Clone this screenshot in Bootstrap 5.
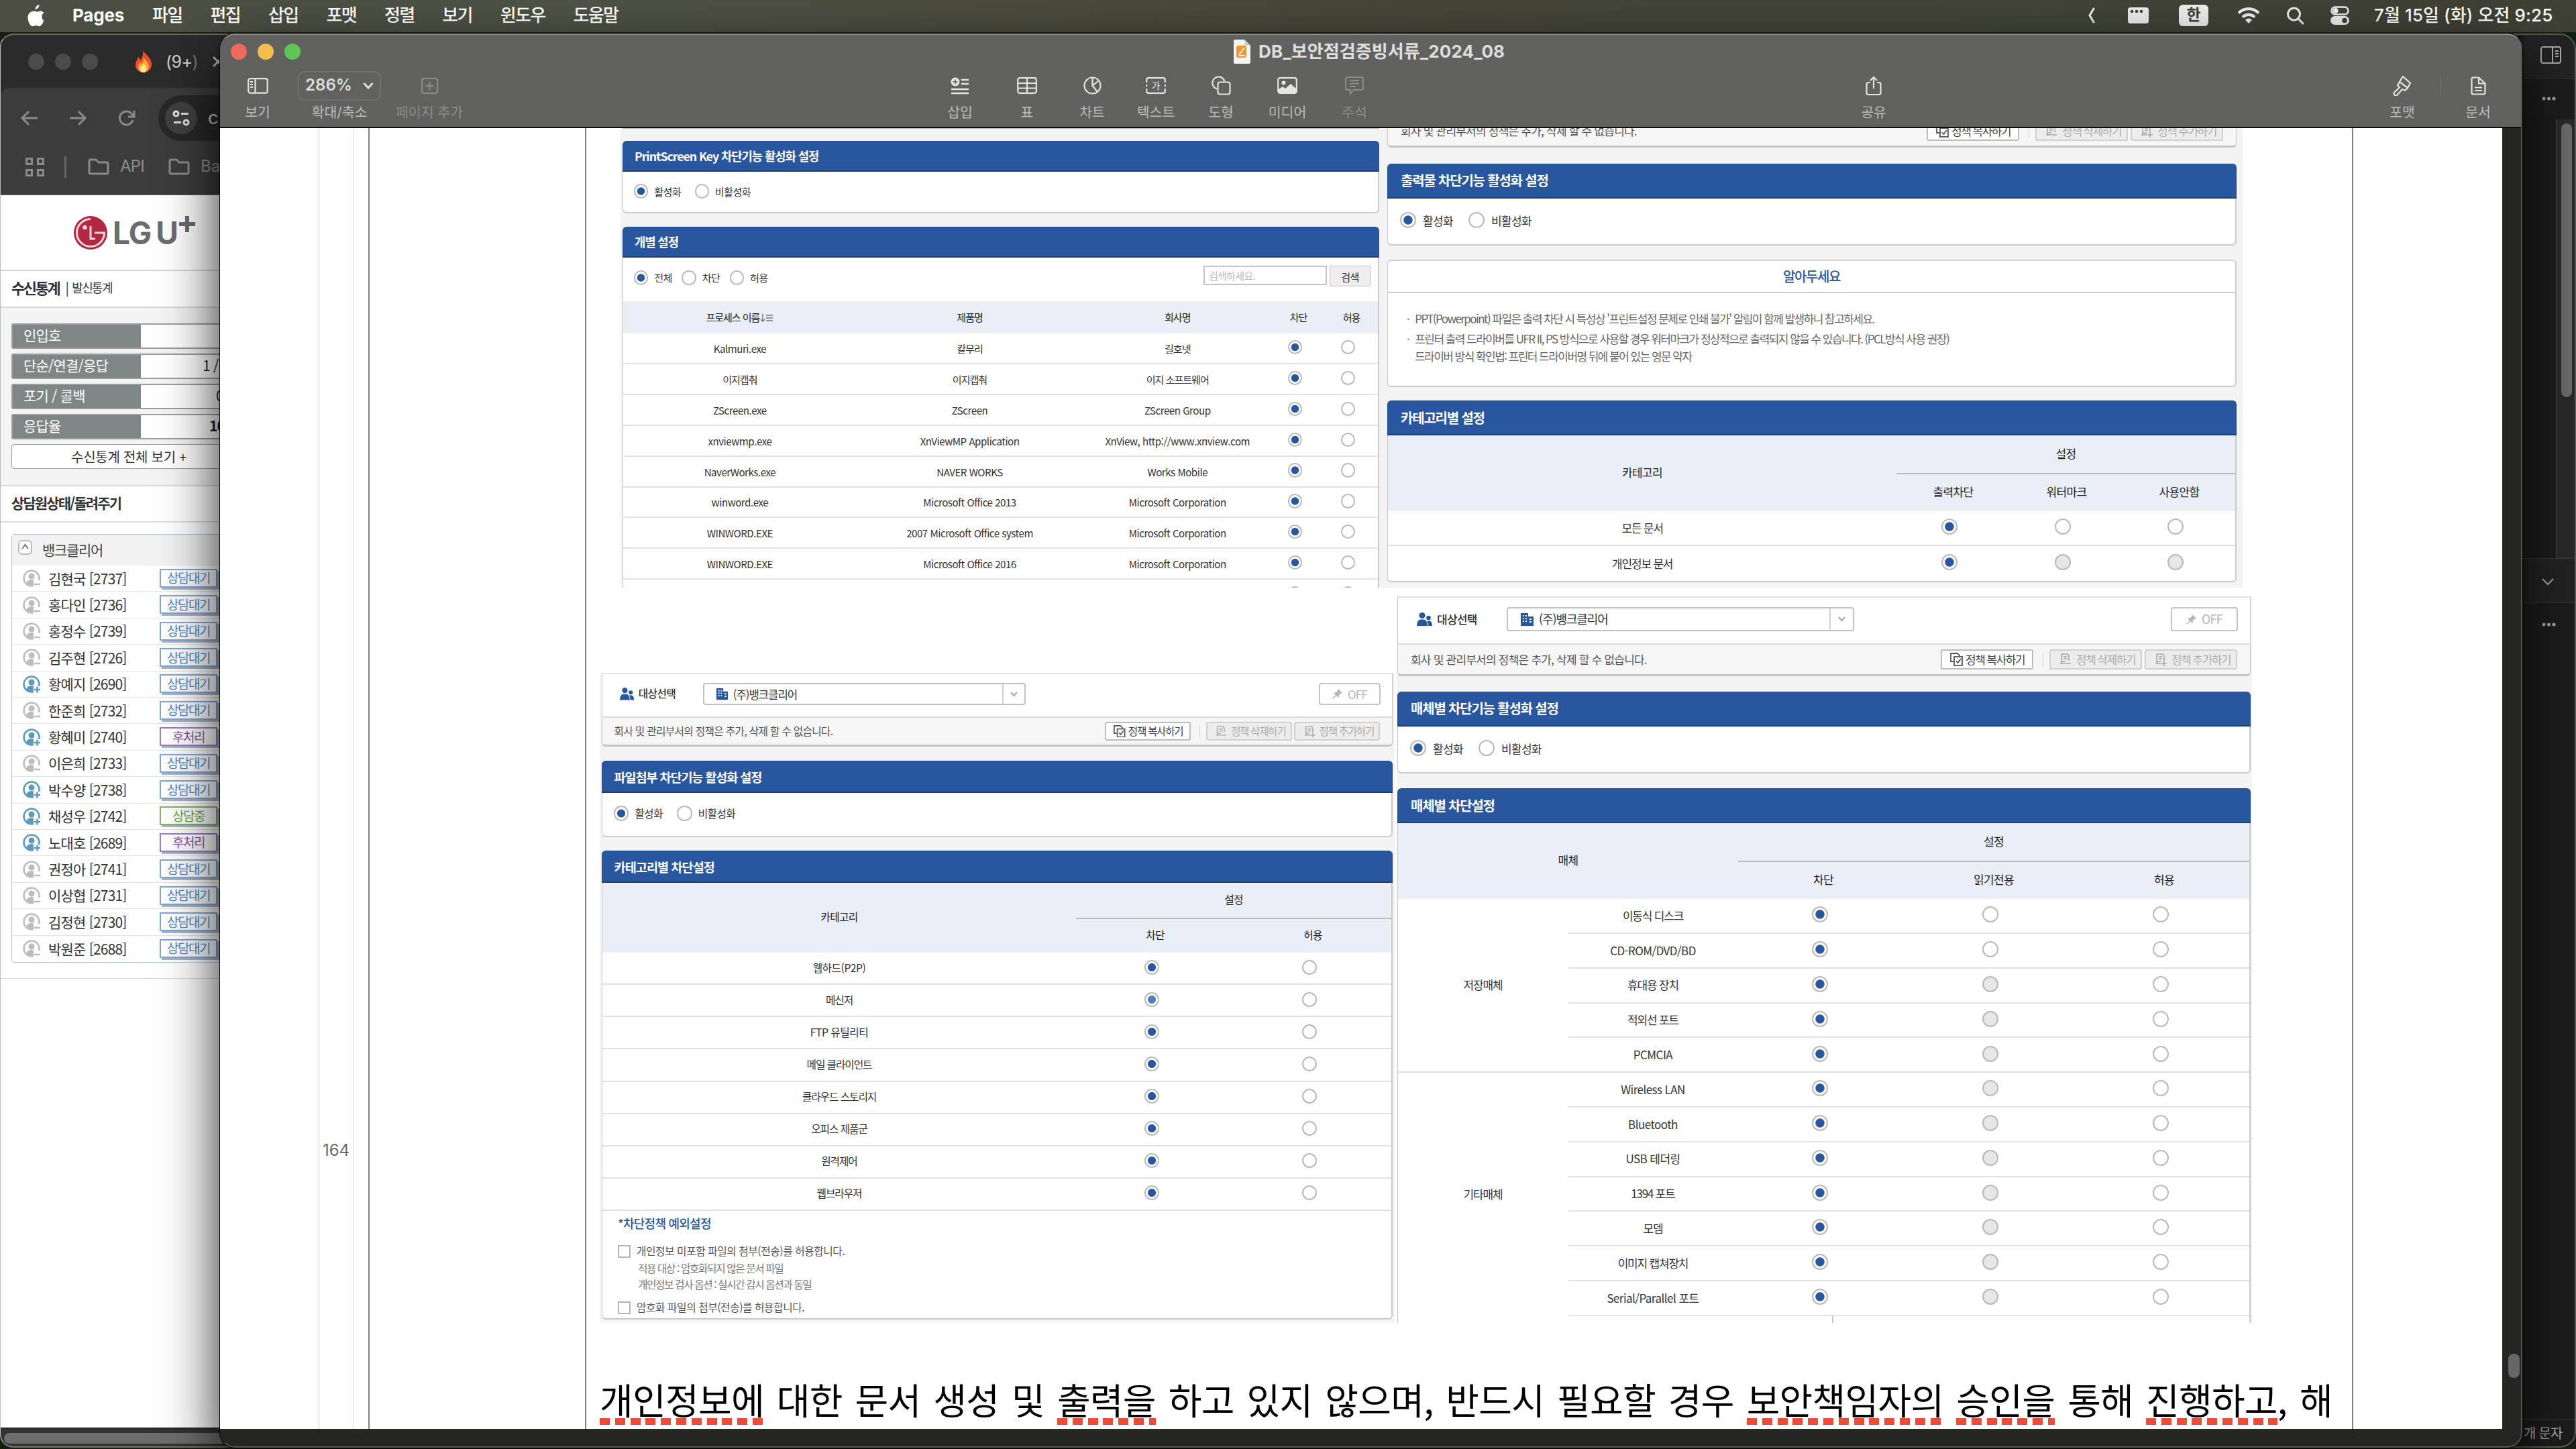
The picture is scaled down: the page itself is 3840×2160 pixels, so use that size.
<!DOCTYPE html>
<html lang="ko">
<head>
<meta charset="utf-8">
<title>DB_보안점검증빙서류_2024_08</title>
<link href="https://cdn.jsdelivr.net/npm/bootstrap@5.3.0/dist/css/bootstrap.min.css" rel="stylesheet">
<script src="https://cdn.jsdelivr.net/npm/bootstrap@5.3.0/dist/js/bootstrap.bundle.min.js"></script>
<style>
html,body{margin:0;width:3840px;height:2160px;overflow:hidden}
body{background:#16200f;font-family:"Noto Sans CJK KR","Noto Sans",sans-serif;color:#333;position:relative;line-height:1.2;white-space:nowrap}
svg{display:block;flex:none}
.ui{font-family:Inter,"Noto Sans CJK KR",sans-serif}
/* menu bar */
.menubar{height:48px;background:linear-gradient(90deg,#4a4d40,#4e5345 22%,#4a493b 45%,#454538 60%,#424538 75%,#3f4135);color:#fff;font-size:26px;padding:0 37px 2px 40px}
.menubar .items{gap:42px;letter-spacing:-1.7px;font-weight:500}
.clock{width:264px;letter-spacing:.1px;font-weight:500}
.han{width:44px;height:32px;background:#eeeeec;color:#3f4135;border-radius:6px;font-size:23px;font-weight:700}
.win{position:absolute;top:50px;height:2108px;overflow:hidden}
/* browser */
.w-browser{left:0;width:420px;border-radius:20px;background:#fff;border:2px solid #6a6a6a;border-left:1px solid #bbb;border-bottom-color:#777}
.tabs{height:79px;background:#2b2b2b;padding-left:41px;color:#cfcfcf;font-size:25px}
.dot{width:24px;height:24px;border-radius:50%;background:#4b4b4b;flex:none}
.navrow{height:90px;background:#3c3c3c;padding-left:28px;color:#8d8d8d;border-radius:14px 0 0 0}
.pill{margin-left:33px;width:400px;height:68px;border-radius:34px;background:#282828;color:#ccc;font-size:27px;padding-left:10px}
.pill .c{width:48px;height:48px;border-radius:50%;background:#404040}
.bm{height:70px;background:#3c3c3c;color:#8d8d8d;font-size:24px;padding:0 0 13px 37px;border-bottom:2px solid #4a4a4a}
.logo{height:111px;padding:0 0 0 109px}
.logo .t{font-size:46px;font-weight:700;color:#6b6c6f;letter-spacing:-1px;line-height:46px}
.stat-t{height:57px;border-top:2px solid #d4d4d4;border-bottom:2px solid #d4d4d4;padding:0 0 4px 16px;font-size:20px;letter-spacing:-1.6px}
.stats{height:266px;background:#f4f4f4;padding:23px 0 0 16px;border-bottom:2px solid #d9d9d9}
.st{height:38px;margin-bottom:7px;border:2px solid #999f9d;background:#fff;font-size:21px;letter-spacing:-.8px;width:390px;border-radius:3px}
.st .l{width:191px;height:100%;background:#7e8785;color:#fff;padding:0 0 2px 16px}
.st .v{padding-bottom:2px;color:#222}
.stb{height:37px;width:390px;border:1px solid #999;border-radius:4px;background:#fff;margin-top:1px;padding-left:88px;font-size:20px;letter-spacing:-.25px}
.ag-t{height:54px;border-bottom:2px solid #dedede;padding:0 0 2px 16px;font-size:21px;letter-spacing:-1.9px}
.ag{margin:17px 0 0 16px;width:390px;border:1px solid #b3c2d2;border-radius:4px;height:639px}
.ag-h{height:46px;background:#f2f2f2;padding-left:9px;font-size:21px;letter-spacing:-1.3px;color:#444}
.ag-r{height:39.42px;border-bottom:1px solid #e6e6e6;padding-left:16px;font-size:21px;letter-spacing:-.8px}
.ag-r:last-child{border:0}
.ag-r .n{width:177px;padding-left:11px}
.tag{width:86px;height:28px;border:2px solid #7fa6d6;color:#4c86c6;font-size:19px;letter-spacing:-1.5px;background:#fff;box-shadow:3px 3px 0 #a9b4c2;margin-top:-1px}
.tag.p{border-color:#9a7cc0;color:#8a55a8}.tag.g{border-color:#83b36b;color:#6aa84f}
.hs{position:absolute;left:0;bottom:0;width:420px;height:28px;background:#333;border-top:2px solid #262626}
.hs i{display:block;margin:6px 0 0 5px;height:16px;border-radius:8px;background:#6d6d6d}
/* editor behind on the right */
.w-editor{left:3600px;width:240px;border-radius:24px;background:#1d1d1d;border:2px solid #5a5a5a;color:#aaa;padding-left:160px}
.w-editor .sec{border-bottom:1px solid #3a3a3a}
.trk{width:28px;border-left:2px solid #3c3c3c;background:#2a2a2a;height:654px;padding:6px 0 0 6px}
.trk i{display:block;width:16px;height:408px;border-radius:8px;background:#6a6a6a}
/* Pages */
.w-pages{left:328px;width:3432px;border-radius:22px;background:#252523;box-shadow:0 0 0 1px #000,0 34px 84px rgba(0,0,0,.88)}
.w-pages::after{content:"";position:absolute;inset:0;border:2px solid #8a8a88;border-color:#8d8d8b #555 #5a5a5a transparent;border-radius:22px;pointer-events:none}
.tb{height:141px;background:#61615f;border-bottom:2px solid #0c0c0c;color:#e4e4e2}
.tb .r1{height:54px;padding-left:16px}
.tb .r2{height:85px;padding-left:7px;align-items:flex-start}
.ti{width:98px;display:flex;flex-direction:column;align-items:center;font-size:20.5px;color:#bcbcba;letter-spacing:0}
.ti .ic{height:47px;display:flex;align-items:center;color:#e4e4e2}
.ti .lb{height:35px;display:flex;align-items:center}
.ti.dim,.ti.dim .ic{color:#8c8c8a}
.zoomb{width:124px;height:44px;border:2px solid #71716f;border-radius:10px;font-size:24px;font-weight:600;color:#dededc;gap:16px}
.canvas{width:3402px;height:1939px;background:#fff;overflow:hidden}
.ruler{width:52px;border-left:1px solid #ccc;border-right:1px solid #dcdcdc;font-size:24px;color:#6b6b6b;margin-left:147px;padding-top:1510px}
.gutter{width:323px;margin-left:22px;border-left:2px solid #808080}
.doc{width:2636px;border-left:2px solid #808080;border-right:2px solid #808080}
.vsb{width:30px;padding:1827px 0 0 9px}
.vsb i{display:block;width:17px;height:36px;border-radius:8px;background:#666}
.shot{background:#f3f3f3;overflow:hidden;color:#333;font-size:calc(var(--u)*17);letter-spacing:calc(var(--u)*-.7)}
.s-a{--u:.889px;width:1133px;height:685px;margin-left:51px;padding:0 2px 0 3px}
.s-b{--u:1px;width:1285px;height:685px;padding:0 9px 0 10px}
.s-c{--u:.9276px;width:1185px;height:969px;margin:114px 0 0 20px;padding:0 3px}
.s-d{--u:1px;width:1275px;height:1083px;margin-left:3px;padding:0 2px 0 1px}
.hd{height:calc(var(--u)*51.7);background:#2857a0;border:1px solid #1f4a8e;border-bottom:2px solid #1c3f78;border-radius:6px 6px 0 0;color:#fff;font-weight:700;font-size:calc(var(--u)*20);letter-spacing:calc(var(--u)*-1.2);padding-left:calc(var(--u)*19)}
.bd{background:#fff;border:2px solid #cacaca;border-top:0;border-left-width:1px;border-radius:0 0 6px 6px}
.act{height:calc(var(--u)*70.3);padding:calc(var(--u)*20.5) 0 0 calc(var(--u)*18);margin-bottom:calc(var(--u)*22.5)}
.rd{display:inline-block;flex:none;width:calc(var(--u)*24);height:calc(var(--u)*24);border:2px solid #b9b9b9;border-radius:50%;background:#fff}
.rd.on{background:radial-gradient(circle closest-side,#2857a0 0 62%,#fff 72%)}
.rd.md{background:radial-gradient(circle closest-side,#4f80bd 0 62%,#fff 72%)}
.rd.off{background:#e6e6e6}
.act .rd+span{margin:calc(var(--u)*2.5) 0 0 calc(var(--u)*10);width:calc(var(--u)*68)}
.th-bg{background:#e9eef7;color:#222}
.th-bg .ctr{padding-bottom:2px}
.ctr{display:flex;align-items:center;justify-content:center}
.rw{display:flex;height:calc(var(--u)*51.8);border-bottom:2px solid #e2e2e2;letter-spacing:calc(var(--u)*-1.2)}
.rw .lt{letter-spacing:calc(var(--u)*-.55)}
.rw .rc{padding:0 calc(var(--u)*11) calc(var(--u)*3.5) 0}
.tgt{height:calc(var(--u)*72);background:#fff;border:1px solid #c6c6c6;border-top:2px solid #e4e4e4;border-bottom:2px solid #dcdcdc;padding:0 calc(var(--u)*18) calc(var(--u)*4) calc(var(--u)*28)}
.sel{height:calc(var(--u)*36);border:2px solid #c2c2c2;border-radius:4px;width:calc(var(--u)*518);margin-left:calc(var(--u)*44);padding-left:calc(var(--u)*19);font-size:calc(var(--u)*18);letter-spacing:calc(var(--u)*-1.1)}
.sel .ar{border-left:2px solid #d0d0d0;width:calc(var(--u)*35);height:100%}
.offb{height:calc(var(--u)*36);width:calc(var(--u)*100);border:2px solid #c4c4c4;border-radius:4px;color:#b5b5b5;font-size:calc(var(--u)*18)}
.pol{height:calc(var(--u)*47);background:#f6f6f6;border:1px solid #c6c6c6;border-top:0;border-bottom:3px solid #c4c4c4;border-radius:0 0 6px 6px;padding:0 calc(var(--u)*19) 0 calc(var(--u)*19);color:#555;letter-spacing:calc(var(--u)*-.78)}
.pb{height:calc(var(--u)*30);width:calc(var(--u)*138);border:2px solid #bdbdbd;border-radius:3px;background:#fff;color:#444;padding-left:calc(var(--u)*12);letter-spacing:calc(var(--u)*-1.5)}
.pb svg{width:calc(var(--u)*19);height:calc(var(--u)*20);margin-right:calc(var(--u)*4)}
.pb.x{background:#ececec;color:#adadad;border-color:#cfcfcf}
.pb.x svg{margin-right:calc(var(--u)*7)}
.psep{width:1px;height:calc(var(--u)*20);background:#d2d2d2;margin:0 calc(var(--u)*9) 0 calc(var(--u)*14)}
.sch{width:184px;height:29px;border:2px solid #c4c4c4;color:#bbb;padding-left:6px;letter-spacing:-.7px;font-size:15px}
.schb{width:61px;height:31px;border:1px solid #c4c4c4;background:#eee;margin:0 11px 0 4px}
.note{color:#666;letter-spacing:-1.55px}
.cb{width:19px;height:19px;border:2px solid #b4b4b4;background:#fff;flex:none}
.sen{margin:74px 0 0 20px;font-size:54px;line-height:80px;letter-spacing:-.7px;word-spacing:4.4px;color:#000}
.sp{background:repeating-linear-gradient(90deg,#eb4d3d 0 15px,#fff0 15px 22.8px) 0 calc(100% - 1px)/100% 10px no-repeat}
</style>
</head>
<body>
<nav class="menubar ui d-flex align-items-center">
  <svg width="27" height="33" viewBox="0 0 27 33" fill="#fff"><path d="M18.500 0c.2 3.600-2.700 6.800-5.800 6.900C12.300 3.600 15.300.5 18.500 0zM22.500 17.200c0-3.300 2.600-4.800 2.800-5-1.600-2.300-4-2.700-4.800-2.700-2-.2-4 1.200-5.100 1.200-1 0-2.600-1.200-4.300-1.100C5.800 9.700 1 13.400 1.500 20c.3 5 3.300 12 7 12.300 1.700.1 2.700-1.200 5-1.200 2.200 0 3 1.200 5 1.200 3.300 0 6.300-6.300 6.900-8.700-.2-.1-2.900-1.400-2.900-6.400z"/></svg>
  <div class="items d-flex" style="padding-left:41px"><b style="letter-spacing:-.2px">Pages</b><span>파일</span><span>편집</span><span>삽입</span><span>포맷</span><span>정렬</span><span>보기</span><span>윈도우</span><span>도움말</span></div>
  <div class="d-flex align-items-center ms-auto">
    <svg width="16" height="26" viewBox="0 0 16 26" fill="none" stroke="#eee" stroke-width="3" stroke-linecap="round"><path d="M11 3 5 13l6 10"/></svg>
    <svg style="margin-left:46px" width="31" height="24" viewBox="0 0 31 24"><rect width="31" height="24" rx="4" fill="#eee"/><g fill="#3f4135"><circle cx="6" cy="6" r="2.300"/><circle cx="13" cy="6" r="2.300"/><circle cx="20" cy="6" r="2.300"/></g></svg>
    <div class="han ctr" style="margin-left:45px">한</div>
    <svg style="margin-left:43px" width="34" height="26" viewBox="0 0 34 26" fill="none" stroke="#eee" stroke-width="4.200"><path d="M2 9.500a21 21 0 0 1 30 0M8 15.500a13 13 0 0 1 18 0"/><path d="M17 25l-5-5.500a7 7 0 0 1 10 0z" fill="#eee" stroke="none"/></svg>
    <svg style="margin-left:39px" width="28" height="27" viewBox="0 0 28 27" fill="none" stroke="#eee" stroke-width="3" stroke-linecap="round"><circle cx="11.500" cy="11" r="9"/><path d="M18 18l7 7"/></svg>
    <svg style="margin:0 37px 0 38px" width="28" height="28" viewBox="0 0 28 28"><rect x="1.500" y="1.500" width="25" height="11" rx="5.500" fill="none" stroke="#eee" stroke-width="2.500"/><circle cx="7.500" cy="7" r="4" fill="#eee"/><rect y="15" width="28" height="13" rx="6.500" fill="#eee"/><circle cx="21" cy="21.500" r="3.800" fill="#3f4135"/></svg>
    <div class="clock">7월 15일 (화) 오전 9:25</div>
  </div>
</nav>

<section class="win w-browser">
  <div class="tabs ui d-flex align-items-center"><i class="dot"></i><i class="dot" style="margin-left:16px"></i><i class="dot" style="margin-left:16px"></i>
    <svg style="margin-left:55px" width="26" height="34" viewBox="0 0 26 34"><path d="M12 0c2 5 11 9 13 19 1 8-5 14-12 14S0 28 1 20c.5-4 3-6 4-10 2 1 3 3 3 5 3-4 5-9 4-15z" fill="#e8512a"/><path d="M13 10c1 4 8 7 8 14 0 5-4 9-8 9s-8-3-8-8c0-3 2-5 3-7 1 1 2 2 2 3 2-3 3-7 3-11z" fill="#f9a83a"/><path d="M13 19c1 3 4 4 4 8s-2 6-4 6-5-2-5-5 4-5 5-9z" fill="#ffe98a"/></svg>
    <span style="margin-left:20px;letter-spacing:-.6px">(9+<span style="color:#777">)</span></span>
    <svg style="margin-left:22px" width="16" height="16" viewBox="0 0 16 16" stroke="#bbb" stroke-width="2.500"><path d="M1 1l14 14M15 1 1 15"/></svg></div>
  <div style="background:#2b2b2b"><div class="navrow ui d-flex align-items-center">
    <svg width="30" height="26" viewBox="0 0 30 26" fill="none" stroke="#8a8a8a" stroke-width="3"><path d="M27 13H5M14 3 4 13l10 10"/></svg>
    <svg style="margin-left:43px" width="30" height="26" viewBox="0 0 30 26" fill="none" stroke="#8a8a8a" stroke-width="3"><path d="M2 13h22M15 3l10 10-10 10"/></svg>
    <svg style="margin-left:43px" width="28" height="28" viewBox="0 0 28 28" fill="none" stroke="#8a8a8a" stroke-width="3"><path d="M23 17a10 10 0 1 1-1.500-9L24 11M25 3v9h-9"/></svg>
    <div class="pill d-flex align-items-center"><span class="c ctr"><svg width="26" height="24" viewBox="0 0 26 24" fill="none" stroke="#e0e0e0" stroke-width="3"><circle cx="5.500" cy="5.500" r="3.500"/><path d="M13 5.500h11M2 18.500h11"/><circle cx="20.500" cy="18.500" r="3.500"/></svg></span><span style="margin-left:16px">c</span></div>
  </div></div>
  <div class="bm ui d-flex align-items-center">
    <svg width="28" height="28" viewBox="0 0 28 28" fill="none" stroke="#8a8a8a" stroke-width="3"><path d="M1.500 1.500h8v8h-8zM18.500 1.500h8v8h-8zM1.500 18.500h8v8h-8zM18.500 18.500h8v8h-8z"/></svg>
    <i style="width:3px;height:32px;background:#666;margin:0 32px 0 30px"></i>
    <svg width="32" height="25" viewBox="0 0 32 25" fill="none" stroke="#8a8a8a" stroke-width="3"><path d="M2 4q0-2 2-2h8l4 4h12q2 0 2 2v13q0 2-2 2H4q-2 0-2-2z"/></svg><span style="margin-left:16px;letter-spacing:-.8px">API</span>
    <svg style="margin-left:36px" width="32" height="25" viewBox="0 0 32 25" fill="none" stroke="#8a8a8a" stroke-width="3"><path d="M2 4q0-2 2-2h8l4 4h12q2 0 2 2v13q0 2-2 2H4q-2 0-2-2z"/></svg><span style="margin-left:16px">Bank</span>
  </div>
  <div class="logo d-flex align-items-center ui">
    <svg width="50" height="50" viewBox="0 0 50 50"><circle cx="25" cy="25" r="25" fill="#b32743"/><path d="M25 4.500a20.500 20.500 0 1 0 20.500 20.500H31" fill="none" stroke="#f3d9de" stroke-width="3"/><path d="M25 15v19h7" fill="none" stroke="#f3d9de" stroke-width="3"/><circle cx="16.500" cy="17" r="3.200" fill="#f3d9de"/></svg>
    <div class="t d-flex" style="margin-left:8px">LG<span style="margin-left:7px">U</span><svg style="margin:-2px 0 0 2px" width="24" height="24" viewBox="0 0 24 24" stroke="#6b6c6f" stroke-width="6"><path d="M12 0v24M0 12h24"/></svg></div>
  </div>
  <div class="stat-t d-flex align-items-center"><b style="font-size:22px;letter-spacing:-2.400px">수신통계</b><span style="margin:0 6px 0 9px">|</span><span style="font-size:18px">발신통계</span></div>
  <div class="stats">
    <div class="st d-flex"><div class="l d-flex align-items-center">인입호</div></div>
    <div class="st d-flex"><div class="l d-flex align-items-center">단순/연결/응답</div><div class="v d-flex align-items-center" style="padding-left:92px">1 / 1</div></div>
    <div class="st d-flex"><div class="l d-flex align-items-center">포기 / 콜백</div><div class="v d-flex align-items-center" style="padding-left:112px">0</div></div>
    <div class="st d-flex"><div class="l d-flex align-items-center">응답율</div><div class="v d-flex align-items-center fw-bold" style="padding-left:102px">100</div></div>
    <div class="stb d-flex align-items-center">수신통계 전체 보기 +</div>
  </div>
  <div class="ag-t d-flex align-items-center"><b>상담원상태/돌려주기</b></div>
  <div class="ag"><div class="ag-h d-flex align-items-center"><svg width="21" height="22" viewBox="0 0 21 22" fill="#fff" style="margin:-8px 15px 0 0"><rect x="1" y="1" width="19" height="20" rx="5" stroke="#bbb" stroke-width="2"/><path d="M6 13l4.500-6 4.500 6" fill="none" stroke="#777" stroke-width="2"/></svg>뱅크클리어</div><div id="agents"></div></div>
  <div style="border-bottom:1px solid #d4d4d4;height:24px"></div>
  <div class="hs"><i></i></div>
</section>

<section class="win w-editor">
  <div class="sec d-flex align-items-center" style="height:65px;background:#232323;padding:0 0 4px 25px"><svg width="31" height="26" viewBox="0 0 31 26" fill="none" stroke="#aaa" stroke-width="2"><rect x="1" y="1" width="29" height="24" rx="3"/><path d="M18 1v24M22 7h5M22 11h5M22 15h5"/></svg></div>
  <div style="height:61px;padding:27px 0 0 27px"><svg width="22" height="6" viewBox="0 0 22 6" fill="#aaa"><circle cx="3" cy="3" r="2.500"/><circle cx="10.500" cy="3" r="2.500"/><circle cx="18" cy="3" r="2.500"/></svg></div>
  <div class="trk sec" style="margin-left:48px"><i></i></div>
  <div class="sec" style="height:67px;background:#232323;border-top:1px solid #3a3a3a;padding:29px 0 0 27px"><svg width="18" height="11" viewBox="0 0 18 11" fill="none" stroke="#aaa" stroke-width="2"><path d="M1 1l8 8 8-8"/></svg></div>
  <div class="sec" style="height:1217px;padding:29px 0 0 27px"><svg width="22" height="6" viewBox="0 0 22 6" fill="#aaa"><circle cx="3" cy="3" r="2.500"/><circle cx="10.500" cy="3" r="2.500"/><circle cx="18" cy="3" r="2.500"/></svg></div>
  <div class="d-flex align-items-center" style="height:40px;font-size:20px;letter-spacing:-.8px">개 문자</div>
</section>

<section class="win w-pages">
  <header class="tb ui">
    <div class="r1 d-flex align-items-center">
      <i class="dot" style="background:#ee6a5f"></i><i class="dot" style="background:#f5bd4f;margin-left:16px"></i><i class="dot" style="background:#61c554;margin-left:16px"></i>
      <svg style="margin-left:1391px" width="25" height="36" viewBox="0 0 25 36"><path d="M2 0h14l9 9v25q0 2-2 2H2q-2 0-2-2V2q0-2 2-2z" fill="#f4f4f2"/><path d="M16 0l9 9h-9z" fill="#cfcfcd"/><rect x="4" y="9" width="15" height="18" rx="3" fill="#f0962e"/><path d="M8 23l8-11M8 24h9" stroke="#fff" stroke-width="1.800"/></svg>
      <b style="margin-left:12px;font-size:26px;letter-spacing:.1px;color:#dededc">DB_보안점검증빙서류_2024_08</b>
    </div>
    <div class="r2 d-flex">
      <div class="ti"><div class="ic"><svg width="31" height="24" viewBox="0 0 31 24" fill="none" stroke="currentColor" stroke-width="2.200"><rect x="1.200" y="1.200" width="28.500" height="21.500" rx="3"/><path d="M11.500 1v22M4 6h4M4 10h4M4 14h4"/></svg></div><div class="lb">보기</div></div>
      <div class="ti" style="width:124px;margin-left:11px"><div class="ic"><div class="zoomb ctr">286%<svg width="16" height="11" viewBox="0 0 16 11" fill="none" stroke="currentColor" stroke-width="3"><path d="M1.500 2 8 9l6.500-7"/></svg></div></div><div class="lb">확대/축소</div></div>
      <div class="ti dim" style="width:120px;margin-left:12px"><div class="ic"><svg width="25" height="24" viewBox="0 0 25 24" fill="none" stroke="currentColor" stroke-width="2"><rect x="1" y="1" width="23" height="22" rx="3"/><path d="M12.500 6v12M6.500 12h12"/></svg></div><div class="lb">페이지 추가</div></div>
      <div class="ti" style="margin-left:682px"><div class="ic"><svg width="28" height="26" viewBox="0 0 28 26" stroke="currentColor" stroke-width="2.400" fill="none"><circle cx="7" cy="7" r="6.500" fill="currentColor" stroke="none"/><path d="M7 3.500v7M3.500 7h7" stroke="#61615f" stroke-width="1.600"/><path d="M16 4h11M16 10h11M1 18h26M1 24h26"/></svg></div><div class="lb">삽입</div></div>
      <div class="ti" style="margin-left:2px"><div class="ic"><svg width="30" height="25" viewBox="0 0 30 25" stroke="currentColor" stroke-width="2.200" fill="none"><rect x="1.200" y="1.200" width="27.600" height="22.600" rx="3"/><path d="M1 9h28M1 16.500h28M15 1v23"/></svg></div><div class="lb">표</div></div>
      <div class="ti" style="margin-left:-1px"><div class="ic"><svg width="27" height="27" viewBox="0 0 27 27" stroke="currentColor" stroke-width="2.200" fill="none"><circle cx="13.500" cy="13.500" r="12"/><path d="M13.500 1.500v12l8.500-6.500M13.500 13.500l7 9"/></svg></div><div class="lb">차트</div></div>
      <div class="ti" style="margin-left:-3px"><div class="ic"><svg width="30" height="25" viewBox="0 0 30 25" stroke="currentColor" stroke-width="2.200" fill="none"><path d="M1.200 8V4q0-2.800 2.800-2.800h22q2.800 0 2.800 2.800v4M1.200 17v4q0 2.800 2.800 2.800h22q2.800 0 2.800-2.800v-4M1.200 11v3M28.800 11v3"/><text x="15" y="17.500" font-size="14" fill="currentColor" stroke="none" text-anchor="middle">가</text></svg></div><div class="lb">텍스트</div></div>
      <div class="ti" style="margin-left:-1px"><div class="ic"><svg width="29" height="29" viewBox="0 0 29 29" stroke="currentColor" stroke-width="2.200" fill="none"><path d="M8 19.500a9.200 9.200 0 1 1 11.500-11"/><rect x="9.500" y="9.500" width="18" height="18" rx="3"/></svg></div><div class="lb">도형</div></div>
      <div class="ti" style="margin-left:1px"><div class="ic"><svg width="30" height="25" viewBox="0 0 30 25" stroke="currentColor" stroke-width="2.200" fill="none"><rect x="1.200" y="1.200" width="27.600" height="22.600" rx="3"/><path d="M2 18l6-4 4 3 8-7 8 7v7H2z" fill="currentColor" stroke="none"/><circle cx="9.500" cy="8.500" r="3" fill="currentColor" stroke="none"/></svg></div><div class="lb">미디어</div></div>
      <div class="ti dim" style="margin-left:2px"><div class="ic"><svg width="28" height="27" viewBox="0 0 28 27" stroke="currentColor" stroke-width="2" fill="none"><path d="M4 1h20q3 0 3 3v13q0 3-3 3H13l-5 5.500V20H4q-3 0-3-3V4q0-3 3-3zM7 6h14M7 10.500h14M7 15h9"/></svg></div><div class="lb">주석</div></div>
      <div class="ti" style="margin-left:676px"><div class="ic"><svg width="24" height="30" viewBox="0 0 24 30" stroke="currentColor" stroke-width="2.200" fill="none"><path d="M7 10H4q-2.500 0-2.500 2.500v13Q1.500 28 4 28h16q2.500 0 2.500-2.500v-13Q22.500 10 20 10h-3M12 19V2M7 7l5-5 5 5"/></svg></div><div class="lb">공유</div></div>
      <div class="ti" style="margin-left:690px"><div class="ic"><svg width="28" height="30" viewBox="0 0 28 30" stroke="currentColor" stroke-width="2.200" fill="none"><path d="M15 1l11 10-4 7-12-9zM10 9l-3 5 3 3-8 8q-1 3 1 4 2 1 4-1l7-8 4 2 4-4"/></svg></div><div class="lb">포맷</div></div>
      <i style="width:1px;height:28px;background:#777;margin:11px 6px 0 8px"></i>
      <div class="ti"><div class="ic"><svg width="23" height="28" viewBox="0 0 23 28" stroke="currentColor" stroke-width="2.200" fill="none"><path d="M4 1.500h8l9.500 9V24q0 2.500-2.500 2.500H4Q1.500 26.500 1.500 24V4Q1.500 1.500 4 1.500zM12 1.500v9h9.500M6 16.500h11M6 21h11"/></svg></div><div class="lb">문서</div></div>
    </div>
  </header>
  <main class="d-flex">
    <div class="canvas d-flex">
      <div class="ruler ui text-center">164</div>
      <div class="gutter"></div>
      <article class="doc">
        <div class="d-flex">
          <div class="shot s-a">
            <div style="height:19px;border-top:1px solid #bbb"></div>
            <div class="hd d-flex align-items-center">PrintScreen Key 차단기능 활성화 설정</div>
            <div class="bd act d-flex align-items-start"><i class="rd on"></i><span>활성화</span><i class="rd"></i><span>비활성화</span></div>
            <div class="hd d-flex align-items-center">개별 설정</div>
            <div class="bd d-flex" style="height:65px;padding:19px 0 0 16px;border-radius:0;border-bottom:0">
              <i class="rd on"></i><span style="margin:1px 13px 0 9px;width:38px">전체</span><i class="rd" style="margin-left:-10px"></i><span style="margin:1px 13px 0 9px;width:38px">차단</span><i class="rd" style="margin-left:-10px"></i><span style="margin:1px 0 0 9px">허용</span>
              <div class="d-flex ms-auto" style="margin-top:-7px"><div class="sch d-flex align-items-center">검색하세요.</div><div class="schb ctr">검색</div></div>
            </div>
            <div class="bd" style="border-radius:0;height:440px"><div class="d-flex th-bg" style="height:48px;letter-spacing:-1.1px"><span class="ctr" style="width:348px">프로세스 이름<svg width="19" height="12" viewBox="0 0 19 12" stroke="#777" stroke-width="1.500" fill="none" style="margin:3px 0 0 2px"><path d="M3 0v10M0 8l3 3 3-3M8 2h10M8 6h10M8 10h10"/></svg></span><span class="ctr" style="width:338px">제품명</span><span class="ctr" style="width:282px">회사명</span><span class="ctr" style="width:79px">차단</span><span class="ctr" style="width:79px">허용</span></div><div id="proc"></div></div>
          </div>
          <div class="shot s-b">
            <div class="pol d-flex align-items-center policy" style="margin:-18px 0 24px"></div>
            <div class="hd d-flex align-items-center">출력물 차단기능 활성화 설정</div>
            <div class="bd act d-flex align-items-start"><i class="rd on"></i><span>활성화</span><i class="rd"></i><span>비활성화</span></div>
            <div class="bd" style="height:190px;border-top:2px solid #d0d0d0;border-radius:6px;margin-top:-1px">
              <div class="ctr" style="height:48px;border-bottom:2px solid #ccc;color:#2857a0;font-size:20px;letter-spacing:-1.400px;font-weight:500">알아두세요</div>
              <div class="note" style="padding:25px 0 0 28px"><div style="height:30px;line-height:26px">·<span style="margin-left:9px">PPT(Powerpoint) 파일은 출력 차단 시 특성상 '프린트설정 문제로 인쇄 불가' 알림이 함께 발생하니 참고하세요.</span></div><div style="height:26px;line-height:26px">·<span style="margin-left:9px">프린터 출력 드라이버를 UFR II, PS 방식으로 사용할 경우 워터마크가 정상적으로 출력되지 않을 수 있습니다. (PCL방식 사용 권장)</span></div><div style="padding-left:12px;line-height:26px">드라이버 방식 확인법: 프린터 드라이버명 뒤에 붙어 있는 영문 약자</div></div>
            </div>
            <div class="hd d-flex align-items-center" style="margin-top:20px">카테고리별 설정</div>
            <div class="bd"><div class="d-flex th-bg" style="height:113px"><span class="ctr" style="width:759px">카테고리</span><div style="width:505px"><div class="ctr" style="height:58px;border-bottom:2px solid #bbb">설정</div><div class="d-flex" style="height:55px"><span class="ctr" style="width:169px">출력차단</span><span class="ctr" style="width:169px">워터마크</span><span class="ctr" style="width:167px">사용안함</span></div></div></div><div id="cat"></div></div>
          </div>
        </div>
        <div class="d-flex" style="margin-top:13px">
          <div class="shot s-c">
            <div class="tgt d-flex align-items-center target"></div>
            <div class="pol d-flex align-items-center policy"></div>
            <div class="hd d-flex align-items-center" style="margin-top:21px">파일첨부 차단기능 활성화 설정</div>
            <div class="bd act d-flex align-items-start"><i class="rd on"></i><span>활성화</span><i class="rd"></i><span>비활성화</span></div>
            <div class="hd d-flex align-items-center" style="letter-spacing:-.95px">카테고리별 차단설정</div>
            <div class="bd" style="height:651px"><div class="d-flex th-bg" style="height:104px"><span class="ctr" style="width:706px">카테고리</span><div style="width:470px"><div class="ctr" style="height:54px;border-bottom:2px solid #bbb">설정</div><div class="d-flex" style="height:51px"><span class="ctr" style="width:236px">차단</span><span class="ctr" style="width:234px">허용</span></div></div></div><div id="file"></div>
              <div style="padding:4px 0 0 23px;color:#555;letter-spacing:-.45px"><div style="color:#2857a0;font-size:18px;height:28px;line-height:28px;font-weight:500;letter-spacing:-.75px">*차단정책 예외설정</div>
              <div class="d-flex align-items-center" style="margin-top:16px;height:26px"><i class="cb"></i><span style="margin-left:9px">개인정보 미포함 파일의 첨부(전송)를 허용합니다.</span></div><div style="padding-left:30px;line-height:24px;color:#777;letter-spacing:-1.450px">적용 대상 : 암호화되지 않은 문서 파일<br>개인정보 검사 옵션 : 실시간 감시 옵션과 동일</div>
              <div class="d-flex align-items-center" style="margin-top:10px;height:26px"><i class="cb"></i><span style="margin-left:9px">암호화 파일의 첨부(전송)를 허용합니다.</span></div></div>
            </div>
          </div>
          <div class="shot s-d">
            <div class="tgt d-flex align-items-center target"></div>
            <div class="pol d-flex align-items-center policy"></div>
            <div class="hd d-flex align-items-center" style="margin-top:23px">매체별 차단기능 활성화 설정</div>
            <div class="bd act d-flex align-items-start"><i class="rd on"></i><span>활성화</span><i class="rd"></i><span>비활성화</span></div>
            <div class="hd d-flex align-items-center">매체별 차단설정</div>
            <div class="bd" style="border-radius:0;border-bottom:0"><div class="d-flex th-bg" style="height:113px"><span class="ctr" style="width:508px">매체</span><div style="width:762px"><div class="ctr" style="height:58px;border-bottom:2px solid #bbb">설정</div><div class="d-flex" style="height:55px"><span class="ctr" style="width:254px">차단</span><span class="ctr" style="width:254px">읽기전용</span><span class="ctr" style="width:254px">허용</span></div></div></div>
              <div id="media"></div><div style="height:14px;width:649px;border-right:2px solid #c4c4c4"></div></div>
          </div>
        </div>
        <p class="sen"><span class="sp">개인정보에</span> 대한 문서 생성 및 <span class="sp">출력을</span> 하고 있지 않으며, 반드시 필요할 경우 <span class="sp">보안책임자의</span> <span class="sp">승인을</span> 통해 <span class="sp">진행하고</span>, 해</p>
      </article>
    </div>
    <div class="vsb"><i></i></div>
  </main>
</section>

<script>
const put=(s,h)=>document.querySelectorAll(s).forEach(e=>e.innerHTML=h);
const cell=(t,w)=>`<span class="ctr${/[A-Za-z]/.test(t)?' lt':''}" style="width:${w}px">${t}</span>`;
const rad=(k,w)=>`<span class="ctr rc" style="width:${w}px"><i class="rd ${k}"></i></span>`;

// call agents: name, presence, state
put('#agents',[['김현국 [2737]',0,''],['홍다인 [2736]',0,''],['홍정수 [2739]',0,''],['김주현 [2726]',0,''],['황예지 [2690]',1,''],['한준희 [2732]',0,''],['황혜미 [2740]',1,'p'],['이은희 [2733]',0,''],['박수양 [2738]',1,''],['채성우 [2742]',1,'g'],['노대호 [2689]',1,'p'],['권정아 [2741]',0,''],['이상협 [2731]',0,''],['김정현 [2730]',0,''],['박원준 [2688]',0,'']].map(([n,o,s])=>{
  const c=o?'#5b9bbd':'#bdbdbd';
  return `<div class="ag-r d-flex align-items-center"><svg width="27" height="26" viewBox="0 0 27 26"><circle cx="13" cy="13" r="11.500" fill="#fff" stroke="${c}" stroke-width="2.500"/><circle cx="13" cy="10" r="4.500" fill="${c}"/><path d="M5 21q1-6 8-6t8 6q-8 6-16 0z" fill="${c}"/><rect x="16" y="16" width="11" height="10" fill="#fff"/><path d="${o?'M17 21h9M21.500 16.500v9':'M17 22h9'}" stroke="${c}" stroke-width="2.500"/></svg><span class="n">${n}</span><span class="tag ctr ${s}">${s=='p'?'후처리':s=='g'?'상담중':'상담대기'}</span></div>`}).join(''));

// application process list
put('#proc',[['Kalmuri.exe','칼무리','길호넷'],['이지캡춰','이지캡춰','이지 소프트웨어'],['ZScreen.exe','ZScreen','ZScreen Group'],['xnviewmp.exe','XnViewMP Application','XnView, http://www.xnview.com'],['NaverWorks.exe','NAVER WORKS','Works Mobile'],['winword.exe','Microsoft Office 2013','Microsoft Corporation'],['WINWORD.EXE','2007 Microsoft Office system','Microsoft Corporation'],['WINWORD.EXE','Microsoft Office 2016','Microsoft Corporation'],['','','']].map((r,i)=>`<div class="rw" style="height:45.85px">${cell(r[0],348)}${cell(r[1],338)}${cell(r[2],282)}${rad(i<8?'on':'',79)}${rad('',79)}</div>`).join(''));
put('#cat',`<div class="rw">${cell('모든 문서',759)}${rad('on',169)}${rad('',169)}${rad('',167)}</div><div class="rw border-0">${cell('개인정보 문서',759)}${rad('on',169)}${rad('off',169)}${rad('off',167)}</div>`);
put('#file',['웹하드(P2P)','메신저','FTP 유틸리티','메일 클라이언트','클라우드 스토리지','오피스 제품군','원격제어','웹브라우저'].map((t,i)=>`<div class="rw">${cell(t,706)}${rad(i==1?'md':'on',236)}${rad('',234)}</div>`).join(''));
const group=(g,a,o)=>`<div class="d-flex" style="${o?'':'border-bottom:2px solid #dcdcdc'}"><span class="ctr" style="width:254px;letter-spacing:-1.100px">${g}</span><div>${a.map((t,i)=>`<div class="rw${!o&&i==a.length-1?' border-0':''}" style="height:${!o&&i==a.length-1?49.8:51.8}px">${cell(t,254)}${rad('on',254)}${rad(!o&&i<2?'':'off',254)}${rad('',254)}</div>`).join('')}</div></div>`;
put('#media',group('저장매체',['이동식 디스크','CD-ROM/DVD/BD','휴대용 장치','적외선 포트','PCMCIA'],0)+group('기타매체',['Wireless LAN','Bluetooth','USB 테더링','1394 포트','모뎀','이미지 캡쳐장치','Serial/Parallel 포트'],1));

// policy bar and target selector shared by the captures
const dis=p=>`<svg viewBox="0 0 19 20" fill="none" stroke="#b3b3b3" stroke-width="2"><path d="M4 2h9l2 3v7M4 2v13M7 6h5M7 9h5M2 16h8M3 13h7"/><path d="${p}"/></svg>`;
put('.policy',`<span>회사 및 관리부서의 정책은 추가, 삭제 할 수 없습니다.</span><span class="pb d-flex align-items-center ms-auto"><svg viewBox="0 0 19 20" fill="none" stroke="#555" stroke-width="1.800"><path d="M5 13H1V1h10l3 3v2"/><rect x="6" y="6" width="12" height="13"/><path d="M9 12l2.500 3L16 9"/></svg>정책 복사하기</span><i class="psep"></i><span class="pb x d-flex align-items-center">${dis('M11 16h7')}정책 삭제하기</span><span class="pb x d-flex align-items-center" style="margin-left:calc(var(--u)*4)">${dis('M11 16h8M15 12v8')}정책 추가하기</span>`);
put('.target',`<svg style="width:calc(var(--u)*23);height:calc(var(--u)*22)" viewBox="0 0 23 22" fill="#2857a0"><circle cx="8" cy="5.500" r="4.500"/><path d="M0 21q0-8 5-9.500h6q5 1.500 5 9.500z"/><circle cx="17.500" cy="9" r="3.300"/><path d="M17 21q0-5-2-7.500h4q4 1 4 7.500z"/></svg><span style="margin-left:calc(var(--u)*7);width:calc(var(--u)*60);font-weight:500">대상선택</span><div class="sel d-flex align-items-center"><svg style="width:calc(var(--u)*19);height:calc(var(--u)*19)" viewBox="0 0 19 19"><path d="M0 0h11v5h8v14H0z" fill="#2857a0"/><path d="M3 4h2M7 4h2M3 8h2M7 8h2M3 12h2M7 12h2M13 9h3M13 13h3" stroke="#fff" stroke-width="2"/></svg><span style="margin-left:calc(var(--u)*8)">(주)뱅크클리어</span><span class="ar ctr ms-auto"><svg width="11" height="8" viewBox="0 0 11 8" fill="none" stroke="#aaa" stroke-width="2.200"><path d="M1 1l4.500 5L10 1"/></svg></span></div><div class="offb ctr ms-auto"><svg width="15" height="15" viewBox="0 0 15 15" fill="#b5b5b5" style="margin-right:8px"><path d="M9 0l6 6-2 1-1 0-2 2q0 3-1 4L6 10l-5 5-1-1 5-5-3-3q2-1 4-1l2-2z"/></svg>OFF</div>`);
</script>
</body>
</html>
